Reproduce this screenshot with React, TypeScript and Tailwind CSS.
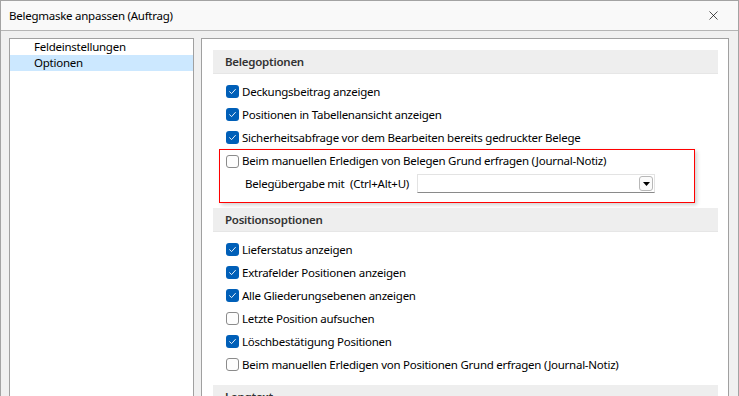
import { X } from "lucide-react";

const font = { fontFamily: '"Noto Sans", "Segoe UI", sans-serif' };

function CheckBox({ checked }: { checked: boolean }) {
  if (checked) {
    return (
      <span className="flex h-[13px] w-[13px] shrink-0 items-center justify-center rounded-[3px] bg-[#005fb8]">
        <svg width="9" height="9" viewBox="0 0 9 9" fill="none">
          <path d="M1.6 4.7 L3.6 6.6 L7.4 2.4" stroke="white" strokeWidth="0.9" strokeLinecap="round" strokeLinejoin="round" />
        </svg>
      </span>
    );
  }
  return <span className="h-[13px] w-[13px] shrink-0 rounded-[3px] border border-[#8b8b8b] bg-[#fdfdfd]" />;
}

function Option({ label, checked, h = "h-[23px]" }: { label: string; checked: boolean; h?: string }) {
  return (
    <div className={`flex ${h} items-center gap-[3px]`}>
      <CheckBox checked={checked} />
      <span className="whitespace-nowrap text-[11.5px] tracking-[-0.25px] text-black">{label}</span>
    </div>
  );
}

function SectionHeader({ title }: { title: string }) {
  return (
    <div className="flex h-[24px] items-center border-b border-[#e6e6e6] bg-[#eeeeee] pl-[12px]">
      <span className="text-[11.5px] font-semibold tracking-[-0.25px] text-[#333333]">{title}</span>
    </div>
  );
}

export default function App() {
  return (
    <div style={font} className="flex h-[396px] w-[739px] flex-col overflow-hidden border-l border-r border-t border-[#a3a3a3] bg-[#f0f0f0]">
      {/* Title bar */}
      <div className="flex h-[30px] shrink-0 items-center justify-between border-b border-[#b4b4b4] bg-[#f9f9f9] pl-[8px] pr-[17px]">
        <span className="text-[11.5px] tracking-[-0.25px] text-black">Belegmaske anpassen (Auftrag)</span>
        <X size={15} strokeWidth={1.1} className="text-black" />
      </div>

      <div className="flex flex-1 gap-[7px] pl-[8px] pt-[7px]">
        {/* Navigation */}
        <div className="h-[400px] w-[185px] shrink-0 border border-[#a0a0a0] bg-white">
          <div className="flex h-[16px] items-center pl-[24px] text-[11.5px] tracking-[-0.25px] text-black">Feldeinstellungen</div>
          <div className="flex h-[16px] items-center bg-[#cce8ff] pl-[24px] text-[11.5px] tracking-[-0.25px] text-black">Optionen</div>
        </div>

        {/* Options */}
        <div className="h-[400px] w-[528px] shrink-0 border border-[#a0a0a0] bg-white pl-[11px] pr-[10px] pt-[11px]">
          <SectionHeader title="Belegoptionen" />
          <div className="pt-[6px]">
            <div className="pl-[13px]">
              <Option label="Deckungsbeitrag anzeigen" checked />
              <Option label="Positionen in Tabellenansicht anzeigen" checked />
              <Option label="Sicherheitsabfrage vor dem Bearbeiten bereits gedruckter Belege" checked />
            </div>
            <div className="ml-[6px] w-[476px] border border-[#ff0000] pb-[7px] pl-[6px] shadow-[2px_2px_4px_rgba(0,0,0,0.18)]">
              <Option label="Beim manuellen Erledigen von Belegen Grund erfragen (Journal-Notiz)" checked={false} h="h-[22px]" />
              <div className="flex h-[23px] items-center pl-[19px]">
                <span className="w-[172px] whitespace-pre text-[11.5px] tracking-[-0.25px] text-black">Belegübergabe mit  (Ctrl+Alt+U)</span>
                <div className="flex h-[19px] w-[238px] items-center justify-end border border-[#e3e3e3] border-b-[#8a8a8a] bg-white pr-[1px]">
                  <div className="flex h-[15px] w-[14px] items-center justify-center rounded-[3px] border border-[#b8b8b8] bg-[#fbfbfb]">
                    <svg width="7" height="4" viewBox="0 0 7 4">
                      <path d="M0 0 H7 L3.5 4 Z" fill="black" />
                    </svg>
                  </div>
                </div>
              </div>
            </div>
          </div>

          <div className="mt-[5px]">
            <SectionHeader title="Positionsoptionen" />
          </div>
          <div className="pb-[9px] pl-[13px] pt-[6px]">
            <Option label="Lieferstatus anzeigen" checked />
            <Option label="Extrafelder Positionen anzeigen" checked />
            <Option label="Alle Gliederungsebenen anzeigen" checked />
            <Option label="Letzte Position aufsuchen" checked={false} />
            <Option label="Löschbestätigung Positionen" checked />
            <Option label="Beim manuellen Erledigen von Positionen Grund erfragen (Journal-Notiz)" checked={false} />
          </div>
          <SectionHeader title="Langtext" />
        </div>
      </div>
    </div>
  );
}
